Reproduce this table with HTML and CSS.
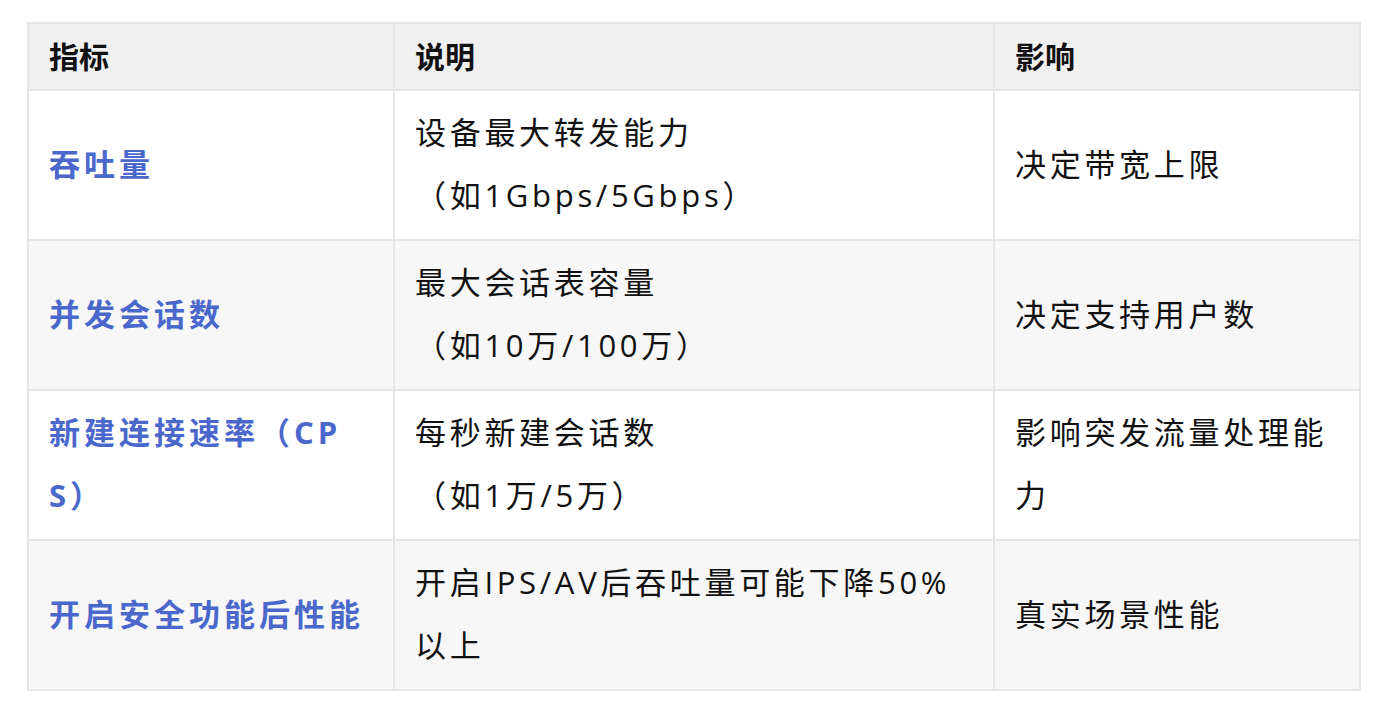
FILE: index.html
```html
<!DOCTYPE html>
<html lang="zh-CN">
<head>
<meta charset="utf-8">
<title>指标</title>
<link rel="stylesheet" href="styles.css">
</head>
<body>
<table class="spec">
  <colgroup>
    <col class="c1"><col class="c2"><col class="c3">
  </colgroup>
  <thead>
    <tr><th>指标</th><th>说明</th><th>影响</th></tr>
  </thead>
  <tbody>
    <tr>
      <td class="key">吞吐量</td>
      <td>设备最大转发能力<br>（如1Gbps/5Gbps）</td>
      <td>决定带宽上限</td>
    </tr>
    <tr>
      <td class="key">并发会话数</td>
      <td>最大会话表容量<br>（如10万/100万）</td>
      <td>决定支持用户数</td>
    </tr>
    <tr>
      <td class="key">新建连接速率（CPS）</td>
      <td>每秒新建会话数<br>（如1万/5万）</td>
      <td>影响突发流量处理能力</td>
    </tr>
    <tr>
      <td class="key">开启安全功能后性能</td>
      <td>开启IPS/AV后吞吐量可能下降50%以上</td>
      <td>真实场景性能</td>
    </tr>
  </tbody>
</table>
</body>
</html>
```
FILE: styles.css
```css
html, body {
  margin: 0;
  padding: 0;
  background: #ffffff;
}
body {
  padding: 22px 0 0 27px;
  font-family: "Open Sans", "Noto Sans CJK SC", sans-serif;
  color: #111111;
}
.spec {
  border-collapse: collapse;
  table-layout: fixed;
  width: 1332px;
  font-size: 31px;
  letter-spacing: 3.7px;
}
.c1 { width: 366px; }
.c2 { width: 600px; }
.c3 { width: 366px; }
.spec th, .spec td {
  border: 2px solid #e6e6e6;
  padding: 10px 20px 12px 20px;
  line-height: 63px;
  text-align: left;
  vertical-align: middle;
  word-break: break-all;
}
.spec th {
  background: #f0f0f0;
  font-weight: 700;
  font-size: 30px;
  letter-spacing: 0;
  line-height: 44px;
  padding-top: 11px;
  padding-bottom: 10px;
}
.spec tbody tr:nth-child(even) td {
  background: #f7f7f7;
}
.spec td.key {
  color: #4a67cb;
  font-weight: 700;
  letter-spacing: 4px;
}
```
